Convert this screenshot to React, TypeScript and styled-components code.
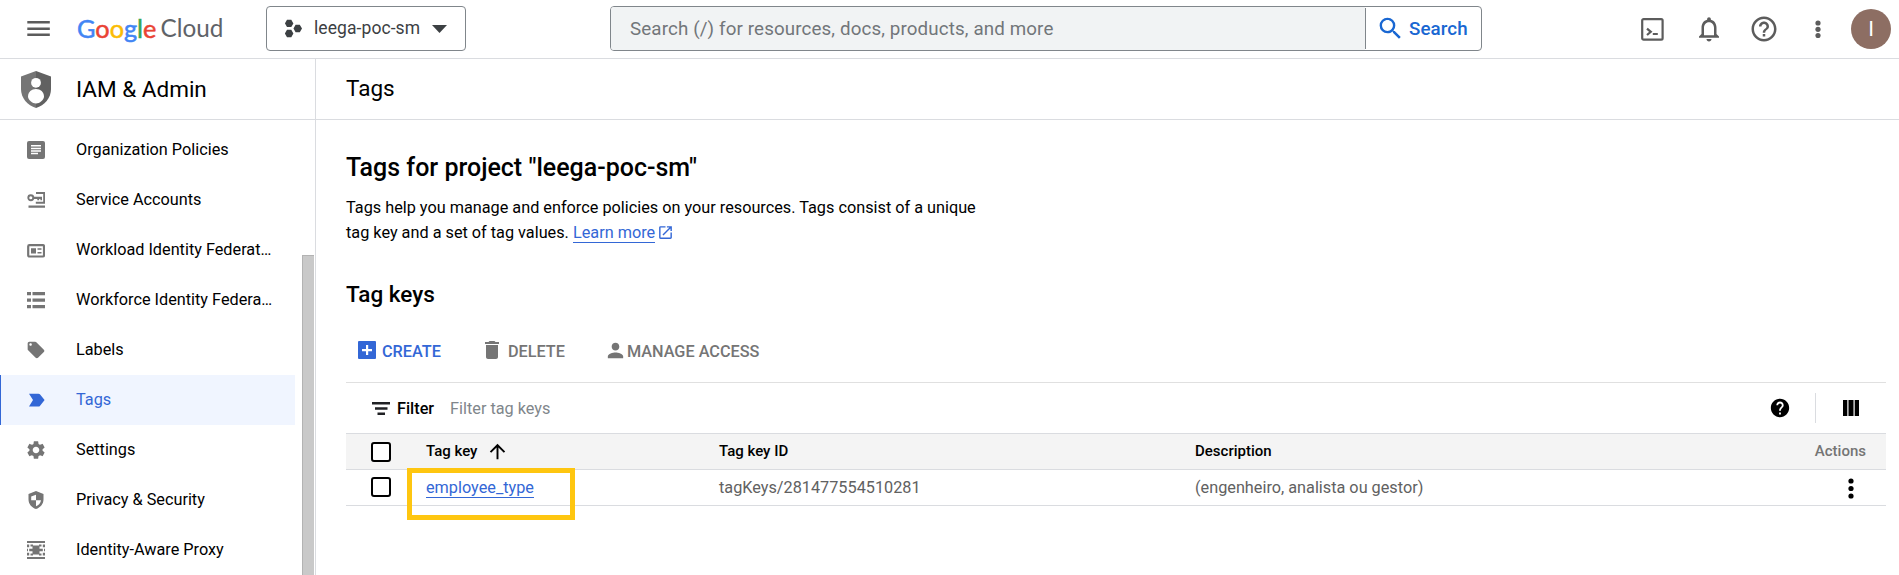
import React from 'react';
import styled, { createGlobalStyle } from 'styled-components';
import {
  MdArrowUpward,
  MdDelete,
  MdHelp,
  MdHelpOutline,
  MdLocalOffer,
  MdNotificationsNone,
  MdOpenInNew,
  MdPerson,
  MdSearch,
  MdSettings,
} from 'react-icons/md';

const GlobalStyle = createGlobalStyle`
  * { box-sizing: border-box; }
  body { margin: 0; background: #fff; color: #000; font-family: Roboto, "Liberation Sans", sans-serif; font-size: 16.25px; overflow: hidden; }
  svg { display: block; flex: none; }
  button { font: inherit; color: inherit; background: none; border: 0; padding: 0; }
`;

const Page = styled.div`
  display: flex;
  flex-direction: column;
  height: 575px;
  overflow: hidden;
`;

/* ---------- top bar ---------- */

const TopBar = styled.header`
  display: flex;
  align-items: flex-start;
  height: 59px;
  flex: none;
  border-bottom: 1px solid #dadce0;
`;

const MenuButton = styled.button`
  margin: 21px 0 0 27px;
`;

const Logo = styled.div`
  display: flex;
  width: 160px;
  margin-left: 27px;
  padding-top: 13px;
  font-family: Lato, "Open Sans", sans-serif;
  line-height: 30px;
  white-space: nowrap;
`;

const Google = styled.span`
  font-size: 25.3px;
  -webkit-text-stroke: 0.5px;
`;

const Letter = styled.span<{ $tint: string }>`
  color: ${(p) => p.$tint};
`;

const Cloud = styled.span`
  margin-left: 4px;
  font-size: 24.3px;
  color: #5f6368;
`;

const ProjectPicker = styled.button`
  display: flex;
  align-items: center;
  width: 200px;
  height: 45px;
  margin: 6px 0 0 29px;
  padding-left: 18px;
  border: 1px solid #80868b;
  border-radius: 4px;
  color: #3c4043;
  font-size: 17.5px;
  letter-spacing: 0.08px;
`;

const ProjectName = styled.span`
  width: 118px;
  margin-left: 12px;
  padding-bottom: 1px;
  text-align: left;
`;

const SearchBox = styled.div`
  display: flex;
  width: 872px;
  height: 45px;
  margin: 6px 0 0 144px;
  border: 1px solid #80868b;
  border-radius: 4px;
  overflow: hidden;
  font-size: 18.75px;
`;

const SearchHint = styled.div`
  flex: 1;
  padding-left: 19px;
  background: #f1f3f4;
  color: #72767a;
  line-height: 44px;
  letter-spacing: 0.13px;
`;

const SearchButton = styled.button`
  display: flex;
  align-items: center;
  width: 116px;
  height: 41px;
  margin-top: 1px;
  padding-left: 10px;
  border-left: 1px solid #80868b;
  color: #1967d2;
  font-weight: 500;
`;

const SearchLabel = styled.span`
  margin-left: 4px;
  letter-spacing: 0.1px;
`;

const Tools = styled.div`
  display: flex;
  align-items: center;
  height: 58px;
  margin-left: auto;
  padding-right: 8px;
  color: #5c5c5c;
`;

const ToolButton = styled.button<{ $gap: number }>`
  display: flex;
  margin-right: ${(p) => p.$gap}px;
`;

const Avatar = styled.div`
  width: 40px;
  height: 40px;
  border-radius: 50%;
  background: #8d6e63;
  color: #fff;
  font-size: 21px;
  line-height: 40px;
  text-align: center;
`;

/* ---------- side navigation ---------- */

const Body = styled.div`
  display: flex;
  flex: 1;
  min-height: 0;
`;

const Sidebar = styled.aside`
  display: flex;
  flex-direction: column;
  width: 316px;
  flex: none;
  border-right: 1px solid #dadce0;
`;

const SectionTitle = styled.div`
  display: flex;
  align-items: center;
  height: 61px;
  flex: none;
  padding-left: 21px;
  border-bottom: 1px solid #dadce0;
  font-size: 22.5px;
`;

const SectionName = styled.span`
  margin-left: 25px;
  padding-bottom: 1px;
`;

const NavScroller = styled.div`
  display: flex;
  justify-content: space-between;
  flex: 1;
  min-height: 0;
  padding-right: 1px;
`;

const NavList = styled.nav`
  width: 295px;
  padding-top: 5px;
`;

const NavRow = styled.a<{ $active?: boolean }>`
  display: flex;
  align-items: center;
  gap: 31px;
  height: 50px;
  padding-left: ${(p) => (p.$active ? 26 : 27)}px;
  border-left: ${(p) => (p.$active ? '1px solid #3367d6' : '0')};
  background: ${(p) => (p.$active ? '#f0f5ff' : 'transparent')};
  color: ${(p) => (p.$active ? '#3367d6' : '#000')};
`;

const NavIcon = styled.span<{ $active?: boolean }>`
  display: flex;
  align-items: center;
  justify-content: center;
  width: 18px;
  height: 18px;
  color: ${(p) => (p.$active ? '#3367d6' : '#757575')};
`;

const NavLabel = styled.span`
  padding-bottom: 1px;
  white-space: nowrap;
`;

const ScrollThumb = styled.div`
  width: 12px;
  margin-top: 135px;
  border: 1px solid #b3b3b3;
  border-width: 1px 0 0 1px;
  background: #c9c9c9;
`;

/* ---------- content ---------- */

const Main = styled.main`
  flex: 1;
  min-width: 0;
`;

const PageTitle = styled.div`
  height: 61px;
  padding-left: 30px;
  border-bottom: 1px solid #dadce0;
  font-size: 22.5px;
  line-height: 59px;
`;

const Content = styled.section`
  padding: 31px 13px 0 30px;
`;

const Heading = styled.h1`
  margin: 0;
  font-size: 25px;
  font-weight: 500;
  line-height: 34px;
`;

const Intro = styled.p`
  width: 650px;
  margin: 10px 0 0;
  line-height: 25px;
`;

const Link = styled.a`
  border-bottom: 1px solid #3367d6;
  color: #3367d6;
`;

const LinkIcon = styled.span`
  display: inline-block;
  margin-left: 2px;
  vertical-align: -3px;
  line-height: 0;
  color: #3367d6;
`;

const SubHeading = styled.h2`
  margin: 34px 0 0;
  font-size: 22.5px;
  font-weight: 500;
  line-height: 30px;
`;

const ActionBar = styled.div`
  display: flex;
  align-items: center;
  height: 74px;
  padding: 9px 0 0 12px;
  border-bottom: 1px solid #e0e0e0;
  font-weight: 500;
`;

const Action = styled.button<{ $color: string; $gap: number; $after: number }>`
  display: flex;
  align-items: center;
  gap: ${(p) => p.$gap}px;
  margin-right: ${(p) => p.$after}px;
  color: ${(p) => p.$color};
  font-weight: 500;
`;

const ActionLabel = styled.span`
  padding-top: 2px;
`;

const FilterBar = styled.div`
  display: flex;
  align-items: center;
  height: 50px;
  padding-left: 26px;
`;

const FilterLabel = styled.span`
  margin-left: 7px;
  font-weight: 500;
`;

const FilterHint = styled.span`
  margin: 0 auto 0 16px;
  color: #80868b;
`;

const BarDivider = styled.span`
  width: 1px;
  height: 30px;
  margin: 0 27px 0 24px;
  background: #dadce0;
`;

const ColumnPicker = styled.button`
  margin-right: 27px;
`;

const GridRow = styled.div<{ $head?: boolean }>`
  display: grid;
  grid-template-columns: 80px 293px 476px 1fr 90px;
  align-items: center;
  height: ${(p) => (p.$head ? 37 : 36)}px;
  border: solid #dadce0;
  border-width: ${(p) => (p.$head ? '1px 0' : '0 0 1px')};
  background: ${(p) => (p.$head ? '#f4f4f4' : '#fff')};
  color: ${(p) => (p.$head ? '#000' : '#616161')};
  font-size: ${(p) => (p.$head ? 15 : 16.25)}px;
  font-weight: ${(p) => (p.$head ? 500 : 400)};
`;

const Cell = styled.div<{ $end?: number; $drop?: number; $muted?: boolean }>`
  display: flex;
  align-items: center;
  justify-content: ${(p) => (p.$end ? 'flex-end' : 'flex-start')};
  position: relative;
  padding: ${(p) => p.$drop ?? 0}px ${(p) => p.$end ?? 0}px 1px 0;
  color: ${(p) => (p.$muted ? '#757575' : 'inherit')};
`;

const Check = styled.span<{ $drop?: number }>`
  width: 20px;
  height: 20px;
  margin: ${(p) => p.$drop ?? 0}px 0 0 25px;
  border: 2px solid #000;
  border-radius: 3px;
  background: #fff;
`;

const SortIcon = styled.span`
  margin: 1px 0 0 9px;
`;

const Highlight = styled.span`
  position: absolute;
  left: -19px;
  top: -8px;
  width: 168px;
  height: 52px;
  border: 5px solid #fec610;
`;

const Menu = () => (
  <svg width="23" height="15" viewBox="0 0 23 15" fill="#5c5c5c">
    <path d="M.3 0h22.500v2.400H.3zM.3 6.500h22.500v2.400H.3zM.3 12.600h22.500V15H.3z" />
  </svg>
);

const Hexes = () => (
  <svg width="17" height="19" viewBox="0 0 17 19" fill="#3c4043">
    <path d="M2 .7h4.300l2.100 3.700-2.100 3.700H2L-.1 4.400zM2 10.700h4.300l2.100 3.800-2.100 3.700H2l-2.100-3.700zM10.600 5.800h4.200L17 9.500l-2.200 3.800h-4.200L8.500 9.500z" />
  </svg>
);

const Caret = () => (
  <svg width="15" height="8" viewBox="0 0 15 8" fill="#3c4043">
    <path d="M0 0h15L7.500 8z" />
  </svg>
);

const Shell = () => (
  <svg width="23" height="23" viewBox="0 0 23 23" fill="none" stroke="#5c5c5c" strokeWidth="2.200">
    <rect x="1.200" y="1.200" width="20.400" height="20.400" rx="1.400" />
    <path d="M6 10.600l3.800 3.200L6 17M11.800 16h5" />
  </svg>
);

const Dots = ({ color, r, step }: { color: string; r: number; step: number }) => (
  <svg width="6" height={step * 2 + 6} fill={color}>
    {[0, 1, 2].map((i) => (
      <circle key={i} cx="3" cy={3 + i * step} r={r} />
    ))}
  </svg>
);

const SectionShield = () => (
  <svg width="30" height="37" viewBox="0 0 30 37">
    <path d="M15 0L0 5.500V18c0 9 6.500 16.500 15 19z" fill="#757575" />
    <path d="M15 0l15 5.500V18c0 9-6.500 16.500-15 19z" fill="#616161" />
    <circle cx="15" cy="11.800" r="4.900" fill="#fff" />
    <path d="M7 25.500c0-4.500 3.500-7.500 8-7.500s8 3 8 7.500c0 3.500-4.500 7-8 7s-8-3.500-8-7z" fill="#fff" />
  </svg>
);

const Icon18 = ({ children }: { children: React.ReactNode }) => (
  <svg width="18" height="18" viewBox="0 0 18 18" fill="currentColor">
    {children}
  </svg>
);

const PolicyIcon = () => (
  <Icon18>
    <rect width="18" height="18" rx="2" />
    <path d="M4 4h10v1.500H4zM4 6.700h10v1.500H4zM4 9.300h10v1.500H4zM4 11.800h7v1.500H4z" fill="#fff" />
  </Icon18>
);

const AccountKeyIcon = () => (
  <Icon18>
    <path d="M9 1h9v11.700H8.800v-1.900h7.400V3H9z" />
    <circle cx="3.800" cy="6.700" r="2.500" fill="none" stroke="currentColor" strokeWidth="1.900" />
    <path d="M6.500 5.700H15v3.500h-1.600V7.900h-1.300v1.300h-1.800V7.900H6.500zM1.500 14.500H18v2.300H1.500z" />
  </Icon18>
);

const WorkloadIcon = () => (
  <Icon18>
    <rect x="1.200" y="4.200" width="15.800" height="11.300" rx="1.200" fill="none" stroke="currentColor" strokeWidth="2.200" />
    <path d="M4 7.200h5v5.300H4zM10.500 7.200h4v1.500h-4zM10.500 11h4v1.500h-4z" />
  </Icon18>
);

const WorkforceIcon = () => (
  <Icon18>
    <path d="M0 1h4v3.300H0zM5.500 1H18v3.300H5.500zM0 7.500h4v3.300H0zM5.500 7.500H18v3.300H5.500zM0 14h4v3.300H0zM5.500 14H18v3.300H5.500z" />
  </Icon18>
);

const TagArrowIcon = () => (
  <Icon18>
    <path d="M2 2.700h9.500c.6 0 1 .2 1.400.6L17.600 9l-4.700 5.900c-.4.4-.8.6-1.400.6H2L6 9z" />
  </Icon18>
);

const PrivacyIcon = () => (
  <Icon18>
    <path fillRule="evenodd" d="M9 0L1.500 3v5.500c0 4.300 3.200 8.300 7.500 9.500 4.300-1.200 7.500-5.200 7.500-9.500V3zM9 3.700v5.500h5c-.4 2.800-2.300 5.100-5 6V9.200H4.200V5.400z" />
  </Icon18>
);

const ProxyIcon = () => (
  <Icon18>
    <path d="M0 0h18v2H0zM0 16h18v2H0zM5.500 4.500h7v9h-7zM3.500 3.500h2.500v2H3.500zM12 3.500h2.500v2H12zM3.500 12.500h2.500v2H3.500zM12 12.500h2.500v2H12zM0 3.500h2.200v2.800H0zM15.800 3.500H18v2.800h-2.200zM0 11.700h2.200v2.800H0zM15.800 11.700H18v2.800h-2.200zM2.200 7.700h4v2.600h-4zM11.800 7.700h4v2.600h-4zM0 7.700h1v2.600H0zM17 7.700h1v2.600h-1z" />
  </Icon18>
);

const CreateIcon = () => (
  <Icon18>
    <rect width="18" height="18" rx="1" />
    <path d="M8 4h2.200v4H14v2.200h-3.800V14H8v-3.800H4V8h4z" fill="#fff" />
  </Icon18>
);

const FilterIcon = () => (
  <svg width="18" height="13" viewBox="0 0 18 13" fill="#202124">
    <path d="M0 0h18v2.500H0zM3 5.200h12.500v2.500H3zM5.500 10.500h7.500V13H5.500z" />
  </svg>
);

const ColumnsIcon = () => (
  <svg width="16" height="16" viewBox="0 0 16 16">
    <path d="M0 0h4.300v16H0zM5.500 0h5v16h-5zM11.700 0H16v16h-4.300z" />
  </svg>
);

const navItems: { label: string; icon: React.ReactNode; active?: boolean }[] = [
  { label: 'Organization Policies', icon: <PolicyIcon /> },
  { label: 'Service Accounts', icon: <AccountKeyIcon /> },
  { label: 'Workload Identity Federat…', icon: <WorkloadIcon /> },
  { label: 'Workforce Identity Federa…', icon: <WorkforceIcon /> },
  { label: 'Labels', icon: <MdLocalOffer size={20} /> },
  { label: 'Tags', icon: <TagArrowIcon />, active: true },
  { label: 'Settings', icon: <MdSettings size={22} /> },
  { label: 'Privacy & Security', icon: <PrivacyIcon /> },
  { label: 'Identity-Aware Proxy', icon: <ProxyIcon /> },
];

const googleLetters: [string, string][] = [
  ['G', '#4285f4'],
  ['o', '#ea4335'],
  ['o', '#fbbc04'],
  ['g', '#4285f4'],
  ['l', '#34a853'],
  ['e', '#ea4335'],
];

export default function App() {
  return (
    <Page>
      <GlobalStyle />
      <TopBar>
        <MenuButton aria-label="Navigation menu"><Menu /></MenuButton>
        <Logo>
          <Google>
            {googleLetters.map(([ch, tint], i) => (
              <Letter key={i} $tint={tint}>{ch}</Letter>
            ))}
          </Google>
          <Cloud>Cloud</Cloud>
        </Logo>
        <ProjectPicker>
          <Hexes />
          <ProjectName>leega-poc-sm</ProjectName>
          <Caret />
        </ProjectPicker>
        <SearchBox>
          <SearchHint>Search (/) for resources, docs, products, and more</SearchHint>
          <SearchButton>
            <MdSearch size={29} />
            <SearchLabel>Search</SearchLabel>
          </SearchButton>
        </SearchBox>
        <Tools>
          <ToolButton $gap={30}><Shell /></ToolButton>
          <ToolButton $gap={25}><MdNotificationsNone size={30} /></ToolButton>
          <ToolButton $gap={36}><MdHelpOutline size={30} /></ToolButton>
          <ToolButton $gap={30}><Dots color="#5c5c5c" r={2.6} step={6.3} /></ToolButton>
          <Avatar>I</Avatar>
        </Tools>
      </TopBar>
      <Body>
        <Sidebar>
          <SectionTitle>
            <SectionShield />
            <SectionName>IAM &amp; Admin</SectionName>
          </SectionTitle>
          <NavScroller>
            <NavList>
              {navItems.map((item) => (
                <NavRow key={item.label} $active={item.active}>
                  <NavIcon $active={item.active}>{item.icon}</NavIcon>
                  <NavLabel>{item.label}</NavLabel>
                </NavRow>
              ))}
            </NavList>
            <ScrollThumb />
          </NavScroller>
        </Sidebar>
        <Main>
          <PageTitle>Tags</PageTitle>
          <Content>
            <Heading>Tags for project "leega-poc-sm"</Heading>
            <Intro>
              Tags help you manage and enforce policies on your resources. Tags consist of a unique tag key and a set of
              tag values. <Link>Learn more</Link>
              <LinkIcon><MdOpenInNew size={17} /></LinkIcon>
            </Intro>
            <SubHeading>Tag keys</SubHeading>
            <ActionBar>
              <Action $color="#3367d6" $gap={6} $after={39}><CreateIcon /><ActionLabel>CREATE</ActionLabel></Action>
              <Action $color="#757575" $gap={4} $after={39}><MdDelete size={24} /><ActionLabel>DELETE</ActionLabel></Action>
              <Action $color="#757575" $gap={0} $after={0}><MdPerson size={23} /><ActionLabel>MANAGE ACCESS</ActionLabel></Action>
            </ActionBar>
            <FilterBar>
              <FilterIcon />
              <FilterLabel>Filter</FilterLabel>
              <FilterHint>Filter tag keys</FilterHint>
              <MdHelp size={22} />
              <BarDivider />
              <ColumnPicker><ColumnsIcon /></ColumnPicker>
            </FilterBar>
            <GridRow $head>
              <Cell><Check $drop={2} /></Cell>
              <Cell>Tag key<SortIcon><MdArrowUpward size={23} /></SortIcon></Cell>
              <Cell>Tag key ID</Cell>
              <Cell>Description</Cell>
              <Cell $end={20} $muted>Actions</Cell>
            </GridRow>
            <GridRow>
              <Cell><Check /></Cell>
              <Cell $drop={2}><Link>employee_type</Link><Highlight /></Cell>
              <Cell>tagKeys/281477554510281</Cell>
              <Cell>(engenheiro, analista ou gestor)</Cell>
              <Cell $end={32} $drop={3}><Dots color="#000" r={2.6} step={7.5} /></Cell>
            </GridRow>
          </Content>
        </Main>
      </Body>
    </Page>
  );
}
